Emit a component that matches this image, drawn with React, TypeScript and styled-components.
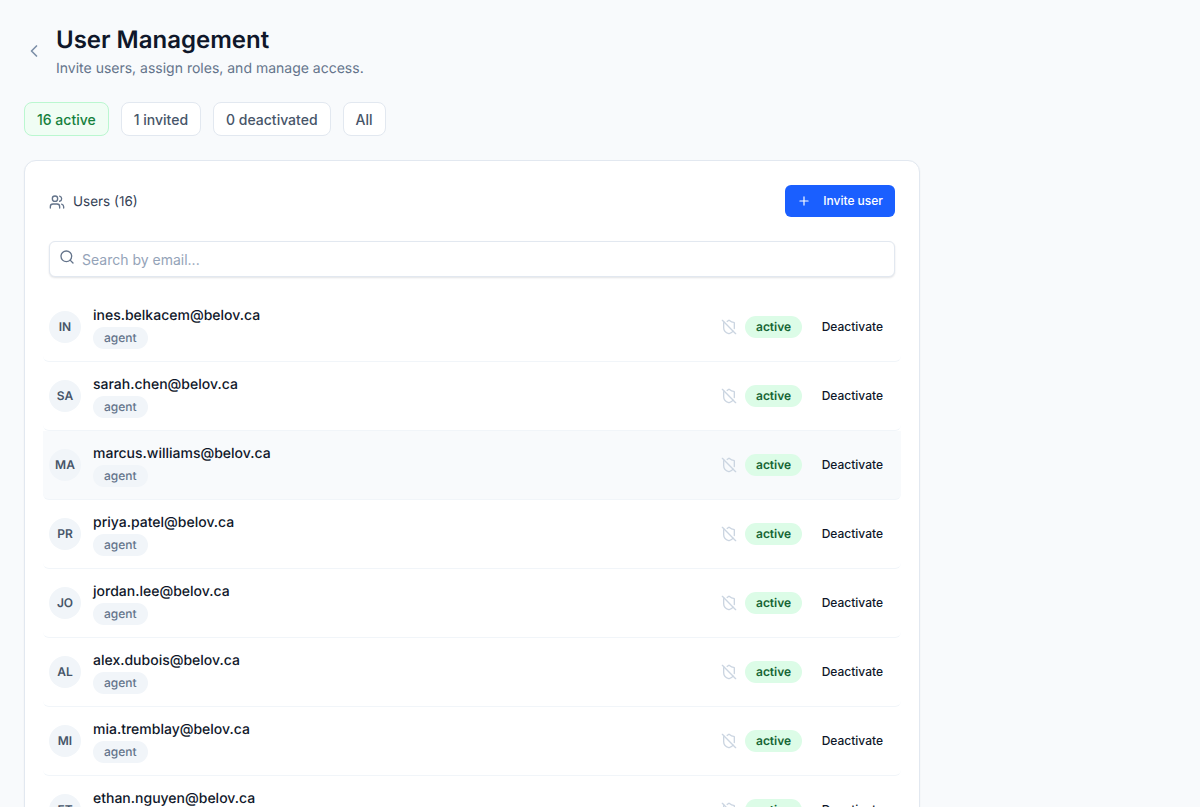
import React from "react";
import styled, { createGlobalStyle } from "styled-components";
import { ChevronLeft, Plus, Search, ShieldOff, Users } from "lucide-react";

const Global = createGlobalStyle`
  html, body { margin:0; padding:0; height:100%; overflow:hidden; background:#f8fafc; }
  body { font-family:Inter, "Liberation Sans", sans-serif; text-rendering:geometricPrecision; }
  * { box-sizing:border-box; }
`;

const Page = styled.main`
  padding:24px;
  max-width:944px;
  height:807px;
  overflow:hidden;
`;

const Header = styled.header`
  display:flex; align-items:center; gap:12px;
  margin-bottom:24px;
`;

const BackButton = styled.button`
  display:flex; align-items:center; justify-content:center;
  width:20px; height:20px; padding:0;
  border:0; background:none; color:#7c8fa8;
`;

const Title = styled.h1`
  margin:0; font-size:24px; line-height:32px; font-weight:600; color:#0f172a;
`;

const Subtitle = styled.p`
  margin:3px 0 0; font-size:14px; line-height:19px; color:#64748b;
`;

const Filters = styled.div`
  display:flex; gap:12px; margin-bottom:24px;
`;

const FilterPill = styled.button<{ $active?: boolean }>`
  height:34px; padding:0 12px;
  border-radius:8px;
  font-family:inherit; font-size:14px; font-weight:500;
  border:1px solid ${p => (p.$active ? "#bbf7d0" : "#e2e8f0")};
  background:${p => (p.$active ? "#f0fdf4" : "#fff")};
  color:${p => (p.$active ? "#15803d" : "#475569")};
`;

const Card = styled.section`
  background:#fff;
  border:1px solid #e2e8f0;
  border-radius:12px;
  padding:24px;
  box-shadow:0 1px 2px rgba(15,23,42,.05);
`;

const CardHead = styled.div`
  display:flex; align-items:center; justify-content:space-between;
  margin-bottom:24px;
`;

const CardTitle = styled.div`
  display:flex; align-items:center; gap:8px;
  padding-top:1px;
  font-size:13.5px; font-weight:400; color:#334155;
  svg { color:#64748b; }
`;

const InviteButton = styled.button`
  display:flex; align-items:center; gap:12px;
  height:32px; padding:0 12px 1px;
  border:0; border-radius:6px;
  background:#1a5fff; color:#fff;
  font-family:inherit; font-size:12px; font-weight:500;
`;

const SearchBox = styled.label`
  display:flex; align-items:center; gap:7px;
  height:36px; padding:0 9px;
  border:1px solid #e2e8f0; border-radius:6px;
  background:#fff;
  box-shadow:0 1px 2px rgba(15,23,42,.12);
  margin-bottom:16px;
  svg { color:#64748b; flex:none; position:relative; top:-2px; }
`;

const SearchInput = styled.input`
  flex:1; border:0; outline:0; padding:0; background:none;
  font-family:inherit; font-size:14px; color:#0f172a;
  &::placeholder { color:#94a3b8; opacity:1; }
`;

const List = styled.ul`
  list-style:none; margin:0 -6px; padding:0;
`;

const Row = styled.li<{ $hover?: boolean }>`
  display:flex; align-items:center; gap:12px;
  height:69px; padding:0 6px;
  border-bottom:1px solid #f1f5f9;
  border-radius:0 0 6px 6px;
  background:${p => (p.$hover ? "#f8fafc" : "transparent")};
`;

const Avatar = styled.div`
  width:32px; height:32px; flex:none;
  display:flex; align-items:center; justify-content:center;
  padding-bottom:1px;
  border-radius:50%;
  background:#f1f5f9; color:#475569;
  font-size:12px; font-weight:600;
`;

const Info = styled.div`
  flex:1; min-width:0;
  display:flex; flex-direction:column; align-items:flex-start; gap:2px;
`;

const Email = styled.div`
  padding-top:1px;
  font-size:14px; line-height:19px; font-weight:500; color:#0f172a;
`;

const RoleTag = styled.span`
  display:inline-flex; align-items:center;
  height:22px; padding:0 11px 1px;
  border-radius:999px;
  background:#f1f5f9; color:#64748b;
  font-size:12px; font-weight:500;
`;

const Actions = styled.div`
  display:flex; align-items:center;
  svg { color:#cbd5e1; margin-right:8px; }
`;

const StatusBadge = styled.span`
  display:inline-flex; align-items:center;
  height:22px; padding:0 10.5px 1px;
  border-radius:999px;
  background:#dcfce7; color:#166534;
  font-size:12px; font-weight:600;
`;

const DeactivateButton = styled.button`
  height:32px; padding:0 12px 1px; margin-left:8px;
  border:0; background:none;
  font-family:inherit; font-size:12px; font-weight:500; color:#0f172a;
`;

const users = [
  { email: "ines.belkacem@belov.ca", initials: "IN" },
  { email: "sarah.chen@belov.ca", initials: "SA" },
  { email: "marcus.williams@belov.ca", initials: "MA" },
  { email: "priya.patel@belov.ca", initials: "PR" },
  { email: "jordan.lee@belov.ca", initials: "JO" },
  { email: "alex.dubois@belov.ca", initials: "AL" },
  { email: "mia.tremblay@belov.ca", initials: "MI" },
  { email: "ethan.nguyen@belov.ca", initials: "ET" },
];

export default function App() {
  return (
    <Page>
      <Global />
      <Header>
        <BackButton aria-label="Back"><ChevronLeft size={20} /></BackButton>
        <div>
          <Title>User Management</Title>
          <Subtitle>Invite users, assign roles, and manage access.</Subtitle>
        </div>
      </Header>
      <Filters>
        <FilterPill $active>16 active</FilterPill>
        <FilterPill>1 invited</FilterPill>
        <FilterPill>0 deactivated</FilterPill>
        <FilterPill>All</FilterPill>
      </Filters>
      <Card>
        <CardHead>
          <CardTitle><Users size={16} />Users (16)</CardTitle>
          <InviteButton><Plus size={14} />Invite user</InviteButton>
        </CardHead>
        <SearchBox>
          <Search size={16} />
          <SearchInput placeholder="Search by email..." />
        </SearchBox>
        <List>
          {users.map((u, i) => (
            <Row key={u.email} $hover={i === 2}>
              <Avatar>{u.initials}</Avatar>
              <Info>
                <Email>{u.email}</Email>
                <RoleTag>agent</RoleTag>
              </Info>
              <Actions>
                <ShieldOff size={16} />
                <StatusBadge>active</StatusBadge>
                <DeactivateButton>Deactivate</DeactivateButton>
              </Actions>
            </Row>
          ))}
        </List>
      </Card>
    </Page>
  );
}
